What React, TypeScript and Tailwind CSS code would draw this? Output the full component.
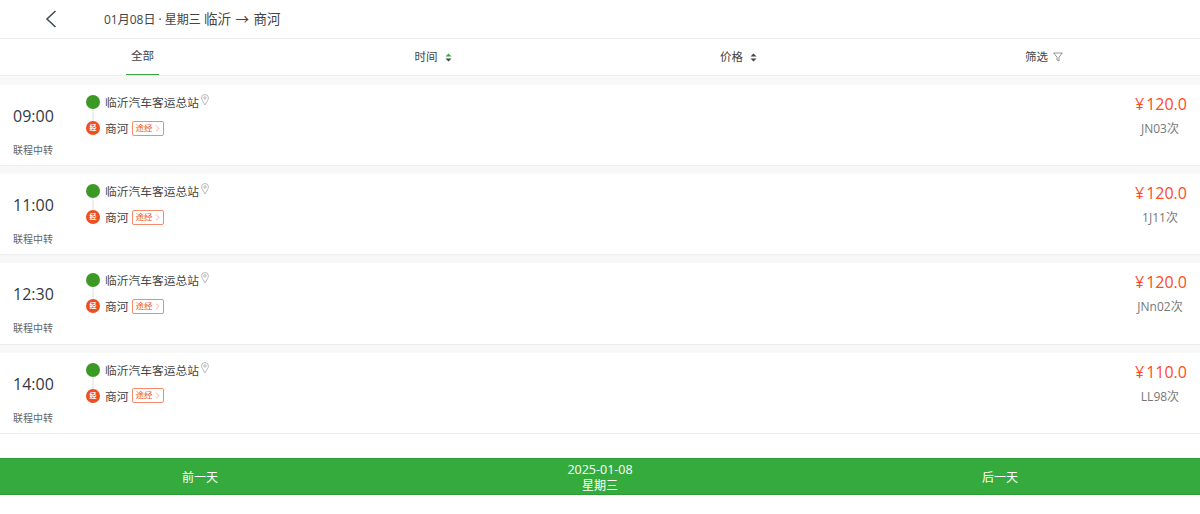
import React from 'react';
import { ChevronRight } from 'lucide-react';

const FONT = "font-['Open_Sans','Noto_Sans_CJK_SC',sans-serif]";

const trips = [
  { time: '09:00', price: '120.0', code: 'JN03次' },
  { time: '11:00', price: '120.0', code: '1J11次' },
  { time: '12:30', price: '120.0', code: 'JNn02次' },
  { time: '14:00', price: '110.0', code: 'LL98次' },
];

const SortIcon = ({ green }: { green?: boolean }) => (
  <svg width="7" height="9" viewBox="0 0 7 9" className="ml-[7px]">
    <path d="M3.5 0.5 L6.5 3.5 H0.5 Z" fill={green ? '#35a83f' : '#444444'} />
    <path d="M3.5 8.5 L6.5 5.5 H0.5 Z" fill="#444444" />
  </svg>
);

const Pin = () => (
  <svg width="8" height="12" viewBox="0 0 8 12" fill="none" stroke="#a8a8a8" strokeWidth="0.8" className="mb-[4px] ml-[2px]">
    <path d="M4 11 C2.5 8 0.6 6.2 0.6 3.9 A3.4 3.4 0 0 1 7.4 3.9 C7.4 6.2 5.5 8 4 11 Z" />
    <circle cx="4" cy="3.9" r="1.2" />
  </svg>
);

const TripRow = ({ time, price, code }: { time: string; price: string; code: string }) => (
  <div className="flex h-[81.2px] bg-white border-b border-[#eeeeee] mb-[8px]">
    <div className="w-[86px] shrink-0 pl-[13px] flex flex-col">
      <div className="mt-[20px] text-[16px] leading-[22px] text-[#333a45]">{time}</div>
      <div className="mt-[16px] text-[10px] leading-[14px] text-[#666666]">联程中转</div>
    </div>
    <div className="flex-1 relative pt-[8px]">
      <div className="absolute left-[6px] top-[23px] w-[2px] h-[15px] bg-[#eeeeee]" />
      <div className="flex items-center h-[18px]">
        <span className="relative w-[14px] h-[14px] rounded-full bg-[#3d9926]" />
        <span className="ml-[5px] text-[11.75px] leading-[18px] text-[#444444]">临沂汽车客运总站</span>
        <Pin />
      </div>
      <div className="flex items-center h-[18px] mt-[8px]">
        <span className="relative w-[14px] h-[14px] rounded-full bg-[#ee4f22] text-white text-[7px] leading-[14px] text-center font-bold">经</span>
        <span className="ml-[5px] text-[11.75px] leading-[18px] text-[#444444]">商河</span>
        <span className="ml-[3px] w-[32px] h-[15px] border border-[#f58a6c] rounded-[2px] flex items-center pl-[3px] text-[8.5px] leading-none text-[#f0552a]">
          途经
          <ChevronRight size={11} strokeWidth={1} className="-ml-[1px]" />
        </span>
      </div>
    </div>
    <div className="w-[80px] shrink-0 flex flex-col items-center">
      <div className="mt-[8px] ml-[2px] text-[16px] leading-[22px] text-[#ff4a1f]">
        <span className="mr-[2px]">¥</span>{price}
      </div>
      <div className="mt-[5px] text-[12px] leading-[18px] text-[#777777]">{code}</div>
    </div>
  </div>
);

export default function App() {
  return (
    <div className={`${FONT} w-[1200px] h-[514px] bg-white overflow-hidden`}>
      <div className="h-[39px] flex items-center border-b border-[#eeeeee]">
        <div className="w-[104px] pl-[45px]">
          <svg width="12" height="18" viewBox="0 0 12 18" fill="none" stroke="#444c58" strokeWidth="1.6">
            <path d="M10.5 1 L2 9 L10.5 17" />
          </svg>
        </div>
        <div className="text-[12px] text-[#444444]">
          01月08日 · 星期三 <span className="text-[13.5px]">临沂<span className="mx-[1px]"> → </span>商河</span>
        </div>
      </div>
      <div className="h-[37px] flex items-stretch border-b border-[#eeeeee] text-[11.5px] text-[#444444]">
        <div className="w-[285px] flex justify-center">
          <div className="w-[33px] flex justify-center pt-[8px] border-b border-[#35a83f] h-[36px]">全部</div>
        </div>
        <div className="w-[296px] flex items-center justify-center h-[36px]">时间<SortIcon green /></div>
        <div className="w-[315px] flex items-center justify-center h-[36px]">价格<SortIcon /></div>
        <div className="w-[296px] flex items-center justify-center h-[36px]">
          筛选
          <svg width="10" height="10" viewBox="0 0 10 10" fill="none" stroke="#777777" strokeWidth="0.8" className="ml-[5px]">
            <path d="M0.7 1 H9.3 L6 5.2 V9 L4 8 V5.2 Z" />
          </svg>
        </div>
      </div>
      <div className="bg-[#f8f8f8] pt-[9px]">
        {trips.map((t) => (
          <TripRow key={t.time} {...t} />
        ))}
      </div>
      <div className="h-[16.2px]" />
      <div className="h-[37px] bg-[#35ab3e] border-y border-[#2d9c35] flex items-center text-white text-[12px]">
        <div className="flex-1 text-center pt-[4px]">前一天</div>
        <div className="flex-1 text-center pt-[4px]">
          <div className="text-[12.5px] leading-[15px]">2025-01-08</div>
          <div className="leading-[17px]">星期三</div>
        </div>
        <div className="flex-1 text-center pt-[4px]">后一天</div>
      </div>
    </div>
  );
}
